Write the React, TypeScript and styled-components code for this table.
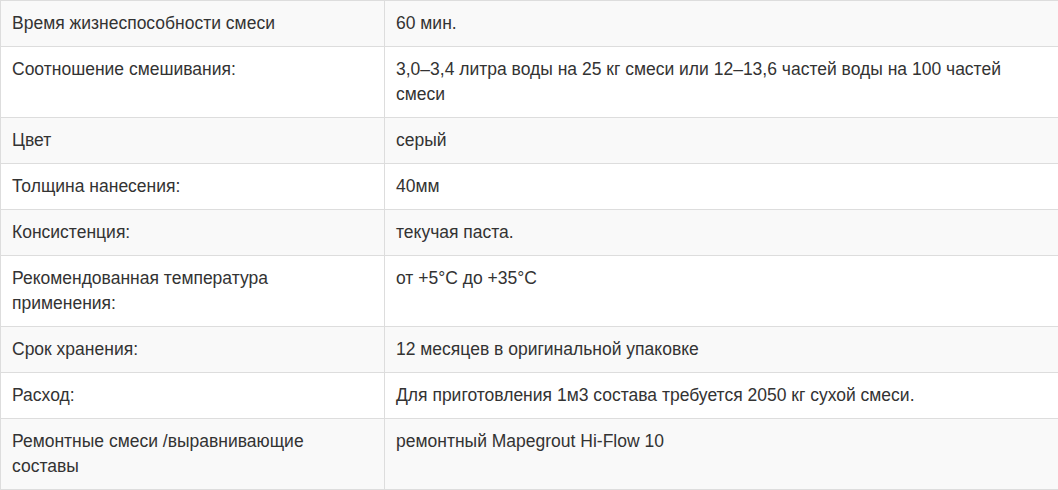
import React from 'react';
import styled, { createGlobalStyle } from 'styled-components';

const GlobalStyle = createGlobalStyle`
	html, body {
		margin: 0;
		padding: 0;
		background: #fff;
		overflow: hidden;
	}
	body {
		font-family: 'Liberation Sans', Arial, sans-serif;
		font-size: 17.5px;
		color: #333;
	}
`;

const rows: [string, string][] = [
	['Время жизнеспособности смеси', '60 мин.'],
	[
		'Соотношение смешивания:',
		'3,0–3,4 литра воды на 25 кг смеси или 12–13,6 частей воды на 100 частей смеси',
	],
	['Цвет', 'серый'],
	['Толщина нанесения:', '40мм'],
	['Консистенция:', 'текучая паста.'],
	['Рекомендованная температура применения:', 'от +5°C до +35°C'],
	['Срок хранения:', '12 месяцев в оригинальной упаковке'],
	['Расход:', 'Для приготовления 1м3 состава требуется 2050 кг сухой смеси.'],
	['Ремонтные смеси /выравнивающие составы', 'ремонтный Mapegrout Hi-Flow 10'],
];

const Table = styled.table`
	width: 1062px;
	border-collapse: collapse;
	border: 1px solid #ddd;
	table-layout: fixed;
`;

const Row = styled.tr<{ $striped: boolean }>`
	background: ${({ $striped }) => ($striped ? '#f9f9f9' : '#fff')};
`;

const Cell = styled.td<{ $label?: boolean }>`
	width: ${({ $label }) => ($label ? '361px' : 'auto')};
	border: 1px solid #ddd;
	padding: 10px 11px 10px 11px;
	line-height: 25px;
	vertical-align: top;
`;

const App = () => (
	<>
		<GlobalStyle />
		<Table>
			<tbody>
				{rows.map(([label, value], i) => (
					<Row key={i} $striped={i % 2 === 0}>
						<Cell $label>{label}</Cell>
						<Cell>{value}</Cell>
					</Row>
				))}
			</tbody>
		</Table>
	</>
);

export default App;
